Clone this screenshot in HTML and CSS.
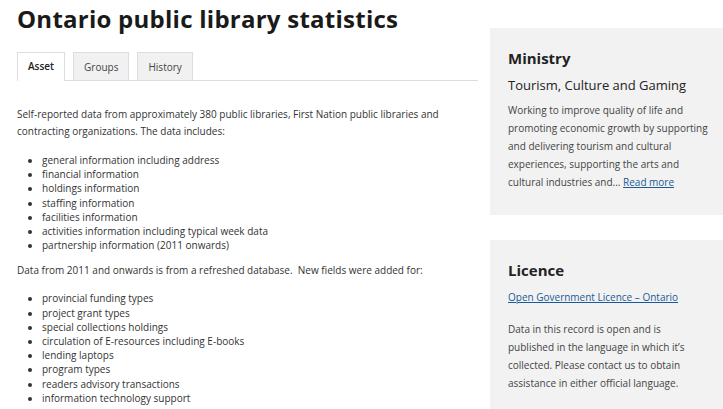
FILE: index.html
```html
<!DOCTYPE html>
<html lang="en">
<head>
    <meta charset="UTF-8">
    <title>Ontario public library statistics</title>
    <link rel="stylesheet" href="styles.css">
</head>
<body>
    <div class="page">
        <div class="main">
            <h1>Ontario public library statistics</h1>
            <div class="tabs">
                <a class="tab active" href="#">Asset</a>
                <a class="tab" href="#">Groups</a>
                <a class="tab" href="#">History</a>
            </div>
            <div class="content">
                <p>Self-reported data from approximately 380 public libraries, First Nation public libraries and contracting organizations. The data includes:</p>
                <ul>
                    <li>general information including address</li>
                    <li>financial information</li>
                    <li>holdings information</li>
                    <li>staffing information</li>
                    <li>facilities information</li>
                    <li>activities information including typical week data</li>
                    <li>partnership information (2011 onwards)</li>
                </ul>
                <p>Data from 2011 and onwards is from a refreshed database.&nbsp; New fields were added for:</p>
                <ul class="new-fields">
                    <li>provincial funding types</li>
                    <li>project grant types</li>
                    <li>special collections holdings</li>
                    <li>circulation of E-resources including E-books</li>
                    <li>lending laptops</li>
                    <li>program types</li>
                    <li>readers advisory transactions</li>
                    <li>information technology support</li>
                </ul>
            </div>
        </div>
        <div class="sidebar">
            <div class="box ministry">
                <h2>Ministry</h2>
                <h3>Tourism, Culture and Gaming</h3>
                <p>Working to improve quality of life and promoting economic growth by supporting and delivering tourism and cultural experiences, supporting the arts and cultural industries and... <a href="#">Read more</a></p>
            </div>
            <div class="box licence">
                <h2>Licence</h2>
                <p><a href="#">Open Government Licence – Ontario</a></p>
                <p class="note">Data in this record is open and is published in the language in which it’s collected. Please contact us to obtain assistance in either official language.</p>
            </div>
        </div>
    </div>
</body>
</html>
```

FILE: styles.css
```css
body {
    margin: 0;
    padding: 0;
    background: #fff;
    color: #333;
    font-family: "Open Sans", "DejaVu Sans", sans-serif;
    font-size: 10px;
    overflow: hidden;
}
.page {
    display: flex;
    align-items: flex-start;
    padding-left: 17px;
}
.main {
    width: 461px;
    flex-shrink: 0;
}
h1 {
    margin: 4px 0 0;
    font-size: 24px;
    font-weight: 700;
    letter-spacing: 0.25px;
    color: #1a1a1a;
    line-height: 30px;
}
.tabs {
    display: flex;
    gap: 8px;
    margin-top: 18px;
    border-bottom: 1px solid #ddd;
}
.tab {
    display: block;
    height: 27px;
    line-height: 29px;
    padding: 0 10px;
    border: 1px solid #ddd;
    border-bottom: none;
    background: #f1f1f1;
    color: #444;
    text-decoration: none;
    font-size: 10px;
}
.tab.active {
    background: #fff;
    color: #222;
    font-weight: 600;
    margin-bottom: -1px;
    height: 28px;
    line-height: 26px;
}
.content {
    padding-top: 25px;
}
.content p {
    margin: 0;
    line-height: 17px;
}
.content ul {
    margin: 13px 0 10px;
    padding-left: 25px;
    line-height: 14.2px;
}
.content ul.new-fields {
    margin-top: 12px;
}
.sidebar {
    margin-left: 12px;
    margin-top: 28px;
    width: 240px;
    flex-shrink: 0;
    display: flex;
    flex-direction: column;
    gap: 25px;
}
.box {
    background: #f2f2f2;
    padding: 20px 18px;
    color: #444;
}
.box h2 {
    margin: 0;
    font-size: 15px;
    font-weight: 700;
    color: #222;
    line-height: 20px;
}
.box h3 {
    margin: 8px 0 0;
    font-size: 13px;
    font-weight: 400;
    color: #222;
    line-height: 18px;
}
.box p {
    margin: 7px 0 0;
    line-height: 18px;
    font-size: 10px;
}
.box a {
    color: #1a5a96;
}
.ministry {
    height: 147px;
}
.licence p {
    margin-top: 8px;
}
.licence .note {
    margin-top: 14px;
    width: 182px;
}
```
